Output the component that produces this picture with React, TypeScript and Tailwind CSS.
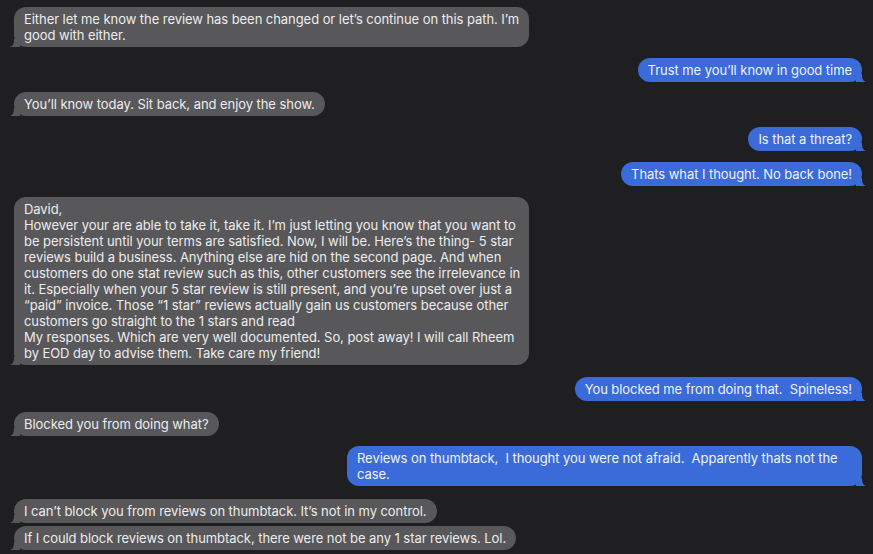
import React from 'react';

type Msg = {
    from: 'me' | 'them';
    lines: string[];
    mt: string;
};

const messages: Msg[] = [
    {
        from: 'them',
        mt: 'mt-[7px]',
        lines: [
            "Either let me know the review has been changed or let\u2019s continue on this path. I\u2019m",
            'good with either.',
        ],
    },
    { from: 'me', mt: 'mt-[11px]', lines: ['Trust me you\u2019ll know in good time'] },
    { from: 'them', mt: 'mt-[10px]', lines: ['You\u2019ll know today. Sit back, and enjoy the show.'] },
    { from: 'me', mt: 'mt-[11px]', lines: ['Is that a threat?'] },
    { from: 'me', mt: 'mt-[11px]', lines: ['Thats what I thought. No back bone!'] },
    {
        from: 'them',
        mt: 'mt-[11px]',
        lines: [
            'David,',
            'However your are able to take it, take it. I\u2019m just letting you know that you want to',
            'be persistent until your terms are satisfied. Now, I will be. Here\u2019s the thing- 5 star',
            'reviews build a business. Anything else are hid on the second page. And when',
            'customers do one stat review such as this, other customers see the irrelevance in',
            'it. Especially when your 5 star review is still present, and you\u2019re upset over just a',
            '\u201cpaid\u201d invoice. Those \u201c1 star\u201d reviews actually gain us customers because other',
            'customers go straight to the 1 stars and read',
            'My responses. Which are very well documented. So, post away! I will call Rheem',
            'by EOD day to advise them. Take care my friend!',
        ],
    },
    { from: 'me', mt: 'mt-[12px]', lines: ['You blocked me from doing that.\u00a0 Spineless!'] },
    { from: 'them', mt: 'mt-[11px]', lines: ['Blocked you from doing what?'] },
    {
        from: 'me',
        mt: 'mt-[10px]',
        lines: [
            'Reviews on thumbtack,\u00a0 I thought you were not afraid.\u00a0 Apparently thats not the',
            'case.',
        ],
    },
    { from: 'them', mt: 'mt-[13px]', lines: ['I can\u2019t block you from reviews on thumbtack. It\u2019s not in my control.'] },
    { from: 'them', mt: 'mt-[3px]', lines: ['If I could block reviews on thumbtack, there were not be any 1 star reviews. Lol.'] },
];

// little tail under the bubble corner
const Tail = ({ side, color }: { side: 'left' | 'right'; color: string }) => (
    <svg
        width="10"
        height="8"
        viewBox="0 0 10 8"
        className={side === 'left' ? 'absolute -left-[4px] bottom-0' : 'absolute -right-[4px] bottom-0'}
    >
        {side === 'left' ? (
            <path d="M10 0 L10 8 L0 8 C3 7 4 5 4 0 Z" fill={color} />
        ) : (
            <path d="M0 0 L0 8 L10 8 C7 7 6 5 6 0 Z" fill={color} />
        )}
    </svg>
);

const Bubble = ({ msg }: { msg: Msg }) => {
    const mine = msg.from === 'me';
    const multi = msg.lines.length > 1;
    return (
        <div className={`flex ${mine ? 'justify-end' : 'justify-start'} ${msg.mt}`}>
            <div
                className={
                    (mine
                        ? 'relative rounded-[12px] bg-[#3b6bd8] px-[10px] py-[4px] text-[#eef2fb]'
                        : 'relative rounded-[12px] bg-[#58585b] px-[10px] py-[4px] text-[#ececec]') +
                    (multi ? ' w-[515px]' : '')
                }
            >
                {msg.lines.map((l, i) => (
                    <div key={i} className="whitespace-pre">
                        {l}
                    </div>
                ))}
                <Tail side={mine ? 'right' : 'left'} color={mine ? '#3b6bd8' : '#58585b'} />
            </div>
        </div>
    );
};

export default function App() {
    return (
        <div
            className="w-[873px] h-[554px] overflow-hidden bg-[#1f1f21] pl-[14px] pr-[11px] text-[13px] leading-[16px] tracking-[-0.06px]"
            style={{ fontFamily: 'Inter, "Liberation Sans", sans-serif' }}
        >
            {messages.map((m, i) => (
                <Bubble key={i} msg={m} />
            ))}
        </div>
    );
}
